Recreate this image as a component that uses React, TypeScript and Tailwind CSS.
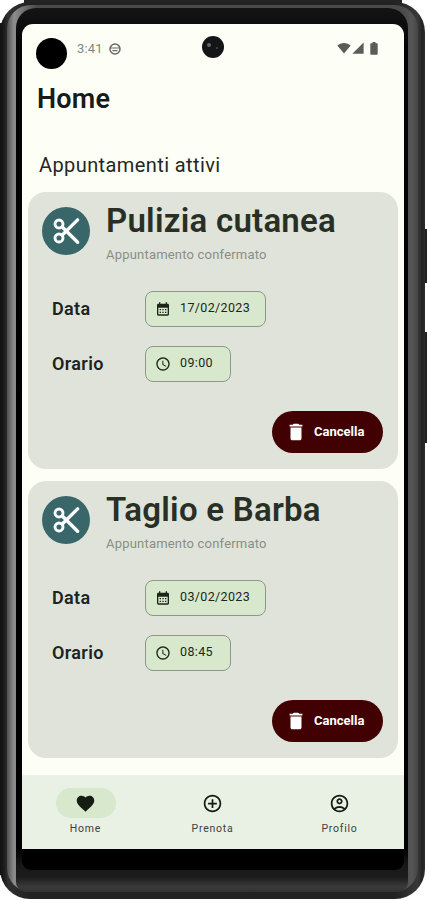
import type { ReactNode } from 'react';
import {
  MdAccessTime,
  MdAddCircleOutline,
  MdCalendarMonth,
  MdDelete,
  MdFavorite,
  MdOutlineAccountCircle,
} from 'react-icons/md';

type Appointment = {
  id: number;
  title: string;
  status: string;
  date: string;
  time: string;
};

const appointments: Appointment[] = [
  {
    id: 1,
    title: 'Pulizia cutanea',
    status: 'Appuntamento confermato',
    date: '17/02/2023',
    time: '09:00',
  },
  {
    id: 2,
    title: 'Taglio e Barba',
    status: 'Appuntamento confermato',
    date: '03/02/2023',
    time: '08:45',
  },
];

function StatusBar() {
  return (
    <div className="relative flex h-[53px] shrink-0 items-start justify-between pl-[14px] pr-[26px]">
      <div className="flex items-start">
        <span className="mt-[14px] size-[31px] rounded-full bg-black" />
        <span className="ml-[10px] mt-[17px] text-[13px] leading-4 tracking-[0.2px] text-[#85867f]">
          3:41
        </span>
        <svg className="ml-[6px] mt-[19px] size-3" viewBox="0 0 12 12" fill="none" stroke="#686a65">
          <circle cx="6" cy="6" r="5" strokeWidth="1.5" />
          <path d="M1 5h10M3.5 7.6h5" strokeWidth="1.1" />
        </svg>
      </div>
      <span className="absolute left-[180px] top-[12px] flex size-[22px] rounded-full bg-[#141517]">
        <span className="ml-[5px] mt-[7px] size-[4px] rounded-full bg-[#62666c]" />
        <span className="ml-[5px] mt-[11px] size-[2px] rounded-full bg-[#44484e]" />
      </span>
      <div className="mt-[18px] flex items-start text-[#5b5c58]">
        <svg className="h-[12px] w-[14px]" viewBox="0 0 14 12" fill="currentColor">
          <path d="M.3 3.6C4 .1 10 .1 13.7 3.6L7 11.6z" />
        </svg>
        <svg className="ml-[1px] h-[12px] w-[12px]" viewBox="0 0 12 12" fill="currentColor">
          <path d="M.3 11.8 11.6.5v11.3z" />
        </svg>
        <svg className="ml-[6px] h-[13px] w-[8px]" viewBox="0 0 8 13" fill="currentColor">
          <path d="M2.5 0h3v1.3H7q.7 0 .7.7v10q0 .7-.7.7H1q-.7 0-.7-.7V2q0-.7.7-.7h1.5z" />
        </svg>
      </div>
    </div>
  );
}

function ScissorsBadge() {
  return (
    <svg className="mt-[15px] size-[48px] shrink-0" viewBox="0 0 48 48" fill="none">
      <circle cx="24" cy="24" r="24" fill="#386669" />
      <g stroke="#fff" strokeLinecap="round">
        <circle cx="17" cy="17" r="4" strokeWidth="2.9" />
        <circle cx="17" cy="31" r="4" strokeWidth="2.9" />
        <path d="M20.3 20 35.6 35.2M20.3 28 35.6 12.9" strokeWidth="3.4" />
      </g>
    </svg>
  );
}

function Field({
  label,
  value,
  icon,
  chipClass,
}: {
  label: string;
  value: string;
  icon: ReactNode;
  chipClass: string;
}) {
  return (
    <div className="flex h-[36px] items-center">
      <span className="w-[93px] text-[18px] font-semibold leading-6 tracking-[0.35px] text-[#20231f]">
        {label}
      </span>
      <span
        className={`flex h-[36px] items-center rounded-lg border border-[#8d9889] bg-[#d7e8cd] pl-[9px] text-[12.5px] text-[#1d251b] ${chipClass}`}
      >
        {icon}
        <span className="ml-[9px]">{value}</span>
      </span>
    </div>
  );
}

function AppointmentCard({ item }: { item: Appointment }) {
  return (
    <div className="flex h-[277px] shrink-0 flex-col rounded-[18px] bg-[#dfe3d9] pb-[16px] pl-[14px] pr-[15px]">
      <div className="flex items-start">
        <ScissorsBadge />
        <div className="ml-[16px]">
          <h2 className="mt-[9px] whitespace-nowrap text-[33px] font-semibold leading-[40px] tracking-[0.25px] text-[#283026]">
            {item.title}
          </h2>
          <p className="mt-[6px] text-[13px] leading-4 tracking-[0.2px] text-[#8b8e86]">
            {item.status}
          </p>
        </div>
      </div>
      <div className="ml-[10px] mt-[28px] flex flex-col gap-[19px]">
        <Field
          label="Data"
          value={item.date}
          icon={<MdCalendarMonth size={16} />}
          chipClass="w-[121px] tracking-[0.35px]"
        />
        <Field
          label="Orario"
          value={item.time}
          icon={<MdAccessTime size={16} />}
          chipClass="w-[86px] tracking-[0.35px]"
        />
      </div>
      <button className="mt-auto flex h-[42px] w-[111px] items-center self-end rounded-full bg-[#410002] pl-[13px] text-[13px] font-bold text-white">
        <MdDelete size={22} />
        <span className="ml-[7px]">Cancella</span>
      </button>
    </div>
  );
}

function NavItem({ label, icon, active }: { label: string; icon: ReactNode; active?: boolean }) {
  return (
    <div className="flex flex-1 flex-col items-center text-[#151d13]">
      <span
        className={`flex h-[30px] w-[60px] items-center justify-center rounded-full ${
          active ? 'bg-[#d7e8cd]' : ''
        }`}
      >
        {icon}
      </span>
      <span className="mt-[3px] text-[10.5px] leading-4 tracking-[0.75px] text-[#3c4139]">
        {label}
      </span>
    </div>
  );
}

export default function App() {
  return (
    <div className="relative h-[900px] w-[427px] overflow-hidden bg-white font-[Roboto,sans-serif]">
      {/* side buttons */}
      <span className="absolute right-0 top-[229px] h-[54px] w-[6px] bg-[#242424]" />
      <span className="absolute right-0 top-[332px] h-[111px] w-[6px] bg-[#242424]" />
      <span className="absolute left-0 top-[23px] h-[852px] w-[6px] bg-[#171717]" />
      <span className="absolute left-[24px] top-0 h-[6px] w-[378px] bg-[#242424]" />

      {/* phone body */}
      <div className="relative h-[900px] pt-[2px]">
        <div className="h-[897px] w-[425px] rounded-[30px] bg-[linear-gradient(90deg,#111_0px,#1c1c1c_4px,#303030_8px,#222_30px,#222_395px,#393939_418px,#232323_422px,#2d2d2d_425px)] px-[7px] pb-[7px] pt-[3px]">
          <div className="h-full rounded-[24px] bg-[linear-gradient(90deg,#505050_0px,#8d8d8d_7px,#4a4a4a_30px,#4a4a4a_395px,#565656_405px,#444_411px)] pl-[9px] pr-[10px] pt-[3px]">
            <div className="flex h-full flex-col rounded-b-[10px] rounded-t-[20px] bg-[linear-gradient(#141414_0%,#050505_4%,#000_50%,#000_95%,#181818_97%,#1c1c1c_98.3%,#3a3a3a_99.4%,#333_100%)] pl-[6px] pr-[4px] pt-[16px]">
              <div className="flex h-[825px] shrink-0 flex-col overflow-hidden rounded-t-[11px] bg-[#fdfff6]">
                <StatusBar />
                <h1 className="mt-[6px] pl-[15px] text-[27px] font-semibold leading-8 tracking-[0.2px] text-[#181b17]">
                  Home
                </h1>
                <p className="mt-[38px] pl-[17px] text-[20px] leading-6 tracking-[0.4px] text-[#242723]">
                  Appuntamenti attivi
                </p>
                <div className="mt-[14.5px] flex flex-col gap-[12px] pl-[6px] pr-[6px]">
                  {appointments.map((item) => (
                    <AppointmentCard key={item.id} item={item} />
                  ))}
                </div>
                <nav className="mt-auto flex h-[74px] shrink-0 bg-[#e9f1e4] pr-[1px] pt-[13px]">
                  <NavItem label="Home" icon={<MdFavorite size={21} />} active />
                  <NavItem label="Prenota" icon={<MdAddCircleOutline size={21} />} />
                  <NavItem label="Profilo" icon={<MdOutlineAccountCircle size={21} />} />
                </nav>
              </div>
              <div className="h-[21px] shrink-0 rounded-b-[9px] bg-black" />
            </div>
          </div>
        </div>
      </div>
    </div>
  );
}
